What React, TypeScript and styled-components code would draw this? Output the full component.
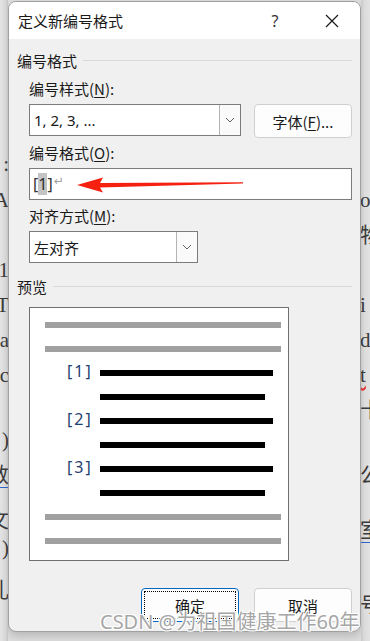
import * as React from 'react';
import styled, { createGlobalStyle } from 'styled-components';

const GlobalStyle = createGlobalStyle`
  html, body {
    margin: 0;
    padding: 0;
    background: #dedede;
    overflow: hidden;
  }
`;

const cjk = `"Noto Sans CJK SC", "Noto Sans", sans-serif`;
const latin = `"Noto Sans", "Noto Sans CJK SC", sans-serif`;

interface DocChar {
  c: string
  top: number
  link?: boolean
  squiggle?: boolean
}

// bits of the document that peek out behind the dialog
const leftChars: DocChar[] = [
  { c: ':', top: 152 },
  { c: 'A', top: 188 },
  { c: '1', top: 258 },
  { c: 'T', top: 293 },
  { c: 'a', top: 328 },
  { c: 'c', top: 363 },
  { c: ')', top: 428 },
  { c: '数', top: 463, link: true },
  { c: '文', top: 508 },
  { c: ')', top: 536 },
  { c: '孔', top: 578 },
];

const rightChars: DocChar[] = [
  { c: 'o', top: 188 },
  { c: '物', top: 223 },
  { c: 'i', top: 293 },
  { c: 'd', top: 328 },
  { c: 't', top: 363, squiggle: true },
  { c: '十', top: 398 },
  { c: '公', top: 463 },
  { c: '室', top: 518, link: true },
  { c: '号', top: 593 },
];

export default function App() {
  return (
    <>
      <GlobalStyle />
      <Page>
        <Strip side="left">
          {leftChars.map((d, i) => (
            <DocGlyph key={`l_${i}`} side="left" link={d.link} squiggle={d.squiggle} style={{ top: d.top }}>{d.c}</DocGlyph>
          ))}
        </Strip>
        <Dialog>
          <TitleBar>
            <Title>定义新编号格式</Title>
            <TitleButtons>
              <HelpButton>?</HelpButton>
              <CloseButton>
                <svg width="14" height="14" viewBox="0 0 14 14">
                  <path d="M1 1 L13 13 M13 1 L1 13" stroke="#1a1a1a" strokeWidth="1.2" />
                </svg>
              </CloseButton>
            </TitleButtons>
          </TitleBar>
          <Body>
            <GroupHeader>
              <span>编号格式</span>
              <Rule />
            </GroupHeader>
            <Indent>
              <FieldLabel>编号样式(<u>N</u>):</FieldLabel>
              <Row>
                <Combo width={212}>
                  <ComboText>1, 2, 3, ...</ComboText>
                  <DropButton><Chevron /></DropButton>
                </Combo>
                <PushButton>字体(<u>F</u>)...</PushButton>
              </Row>
              <FieldLabel gap={5}>编号格式(<u>O</u>):</FieldLabel>
              <TextBox>
                <FormatText>[<Selected>1</Selected>]</FormatText>
                <ReturnMark>↵</ReturnMark>
                <Arrow width="170" height="16" viewBox="0 0 170 16">
                  <path d="M0 8 L26 0.5 L23 6 L166 5.2 L166 6.6 L23 10.5 L26 15.5 Z" fill="#f5200f" />
                </Arrow>
              </TextBox>
              <FieldLabel gap={6}>对齐方式(<u>M</u>):</FieldLabel>
              <Combo width={169}>
                <ComboText>左对齐</ComboText>
                <DropButton><Chevron /></DropButton>
              </Combo>
            </Indent>
            <GroupHeader gap={14}>
              <span>预览</span>
              <Rule />
            </GroupHeader>
            <Indent>
              <Preview>
                <GrayLine />
                <GrayLine />
                {['[1]', '[2]', '[3]'].map(n => (
                  <ListItem key={n}>
                    <Number>{n}</Number>
                    <ItemLines>
                      <BlackLine width={173} />
                      <BlackLine width={165} />
                    </ItemLines>
                  </ListItem>
                ))}
                <GrayLine />
                <GrayLine />
              </Preview>
            </Indent>
            <Footer>
              <DialogButton primary>
                <FocusRing>确定</FocusRing>
              </DialogButton>
              <DialogButton>取消</DialogButton>
            </Footer>
          </Body>
        </Dialog>
        <Strip side="right">
          {rightChars.map((d, i) => (
            <DocGlyph key={`r_${i}`} side="right" link={d.link} squiggle={d.squiggle} style={{ top: d.top }}>{d.c}</DocGlyph>
          ))}
        </Strip>
        <Watermark>CSDN @为祖国健康工作60年</Watermark>
      </Page>
    </>
  );
}

function Chevron() {
  return (
    <svg width="10" height="6" viewBox="0 0 10 6">
      <path d="M1 1 L5 5 L9 1" fill="none" stroke="#606060" strokeWidth="1" />
    </svg>
  );
}

const Page = styled.div`
  position: relative;
  display: flex;
  width: 370px;
  height: 641px;
  overflow: hidden;
  background: #dedede;
`;

const Strip = styled.div<{ side: 'left' | 'right' }>`
  position: relative;
  flex: 0 0 ${p => (p.side === 'left' ? '8px' : '9px')};
  background: ${p => p.side === 'left'
    ? 'linear-gradient(to right, #e4e4e4 0%, #d6d6d6 70%, #c4c4c4 100%)'
    : 'linear-gradient(to right, #c8c8c8 0%, #dcdcdc 40%, #e2e2e2 100%)'};
  overflow: hidden;
`;

const DocGlyph = styled.span<{ side: 'left' | 'right', link?: boolean, squiggle?: boolean }>`
  position: absolute;
  ${p => (p.side === 'left' ? 'right: -1px;' : 'left: -1px;')}
  font-family: "Liberation Serif", "Noto Sans CJK SC", serif;
  font-size: 21px;
  line-height: 24px;
  color: #3a3a3a;
  white-space: nowrap;
  ${p => p.link ? 'border-bottom: 1px solid #2f63c8;' : ''}
  ${p => p.squiggle ? 'text-decoration: underline wavy #e03030;' : ''}
`;

const Dialog = styled.div`
  flex: 0 0 353px;
  height: 631px;
  margin-top: 1px;
  box-sizing: border-box;
  border: 1px solid #a0a0a0;
  border-radius: 8px;
  overflow: hidden;
  display: flex;
  flex-direction: column;
  background: #f0f0f0;
  box-shadow: 0 4px 10px rgba(0, 0, 0, 0.18);
  font-family: ${cjk};
  font-size: 15px;
  color: #1a1a1a;
`;

const TitleBar = styled.div`
  height: 37px;
  background: #ffffff;
  display: flex;
  align-items: center;
  justify-content: space-between;
  padding-left: 9px;
`;

const Title = styled.div`
  font-size: 15px;
  line-height: 20px;
`;

const TitleButtons = styled.div`
  display: flex;
  align-items: center;
`;

const HelpButton = styled.div`
  width: 58px;
  text-align: center;
  font-family: ${latin};
  font-size: 16px;
  line-height: 20px;
  color: #333;
`;

const CloseButton = styled.div`
  width: 56px;
  display: flex;
  justify-content: center;
`;

const Body = styled.div`
  flex: 1;
  display: flex;
  flex-direction: column;
  padding: 12px 8px 0 8px;
`;

const GroupHeader = styled.div<{ gap?: number }>`
  display: flex;
  align-items: center;
  gap: 6px;
  margin-top: ${p => p.gap || 0}px;
  line-height: 20px;
  height: 20px;
`;

const Rule = styled.div`
  flex: 1;
  height: 1px;
  background: #d8d8d8;
  margin-top: -1px;
`;

const Indent = styled.div`
  padding-left: 12px;
  display: flex;
  flex-direction: column;
  align-items: flex-start;
`;

const FieldLabel = styled.div<{ gap?: number }>`
  margin-top: ${p => p.gap ?? 8}px;
  margin-bottom: 5px;
  line-height: 20px;
  height: 20px;

  u {
    text-underline-offset: 2px;
  }
`;

const Row = styled.div`
  display: flex;
  align-items: flex-start;
  gap: 13px;
  width: 100%;
`;

const Combo = styled.div<{ width: number }>`
  width: ${p => p.width}px;
  height: 32px;
  box-sizing: border-box;
  border: 1px solid #7c7c7c;
  background: #ffffff;
  display: flex;
  align-items: stretch;
`;

const ComboText = styled.div`
  flex: 1;
  padding-left: 4px;
  display: flex;
  align-items: center;
  font-family: ${latin};
  font-size: 15px;
`;

const DropButton = styled.div`
  width: 20px;
  border-left: 1px solid #b4b4b4;
  background: #fafafa;
  display: flex;
  align-items: center;
  justify-content: center;
`;

const PushButton = styled.div`
  width: 98px;
  height: 34px;
  box-sizing: border-box;
  border: 1px solid #d0d0d0;
  border-radius: 4px;
  background: #fdfdfd;
  display: flex;
  align-items: center;
  justify-content: center;

  u {
    text-underline-offset: 2px;
  }
`;

const TextBox = styled.div`
  position: relative;
  width: 323px;
  height: 32px;
  box-sizing: border-box;
  border: 1px solid #7c7c7c;
  background: #ffffff;
  display: flex;
  align-items: center;
  padding-left: 3px;
`;

const FormatText = styled.span`
  font-family: ${latin};
  font-size: 16px;
  line-height: 22px;
  color: #333;
`;

const Selected = styled.span`
  display: inline-block;
  background: #c4c4c4;
  line-height: 22px;
  height: 22px;
`;

const ReturnMark = styled.span`
  font-family: "DejaVu Sans", sans-serif;
  font-size: 12px;
  color: #a0a0a0;
  margin-left: 1px;
  margin-top: -6px;
`;

const Arrow = styled.svg`
  position: absolute;
  left: 47px;
  top: 8px;
`;

const Preview = styled.div`
  width: 260px;
  height: 254px;
  box-sizing: border-box;
  border: 1px solid #707070;
  background: #ffffff;
  margin-top: 10px;
  padding: 14px 7px 0 15px;
  display: flex;
  flex-direction: column;
  gap: 18px;
`;

const GrayLine = styled.div`
  width: 236px;
  height: 6px;
  background: #a0a0a0;
`;

const ListItem = styled.div`
  display: flex;
  align-items: flex-start;
  padding-left: 22px;
`;

const Number = styled.div`
  width: 33px;
  font-family: ${latin};
  font-size: 16px;
  line-height: 18px;
  margin-top: -8px;
  color: #1f3f6f;
  letter-spacing: 2px;
`;

const ItemLines = styled.div`
  display: flex;
  flex-direction: column;
  gap: 18px;
`;

const BlackLine = styled.div<{ width: number }>`
  width: ${p => p.width}px;
  height: 6px;
  background: #000000;
`;

const Footer = styled.div`
  display: flex;
  justify-content: flex-end;
  gap: 15px;
  margin-top: 27px;
`;

const DialogButton = styled.div<{ primary?: boolean }>`
  width: 98px;
  height: 34px;
  box-sizing: border-box;
  border: 1px solid ${p => (p.primary ? '#0067c0' : '#d0d0d0')};
  border-radius: 4px;
  background: #fdfdfd;
  display: flex;
  align-items: center;
  justify-content: center;
  padding: 2px;
`;

const FocusRing = styled.div`
  width: 100%;
  height: 100%;
  box-sizing: border-box;
  border: 1px dotted #000;
  display: flex;
  align-items: center;
  justify-content: center;
`;

const Watermark = styled.div`
  position: absolute;
  left: 100px;
  top: 609px;
  font-family: ${latin};
  font-size: 20px;
  line-height: 26px;
  color: #a6a6a6;
  white-space: nowrap;
  text-shadow: 1px 1px 0 #fff, -1px -1px 0 #fff, 1px -1px 0 #fff, -1px 1px 0 #fff;
`;
